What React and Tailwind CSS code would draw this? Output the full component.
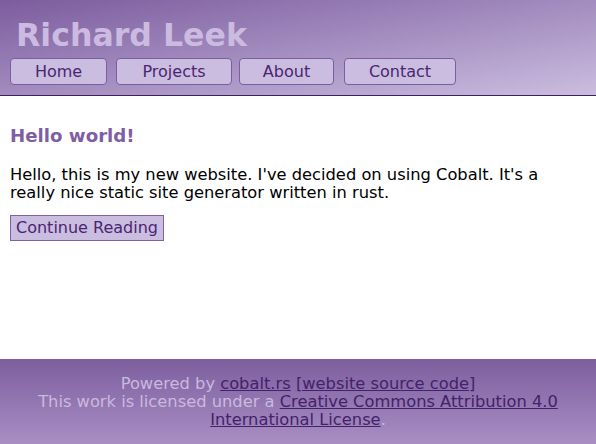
export default function App() {
  const nav = [
    ["Home", "w-[97px]", "ml-[10px]"],
    ["Projects", "w-[116px]", "ml-[9px]"],
    ["About", "w-[95px]", "ml-[7px]"],
    ["Contact", "w-[112px]", "ml-[10px]"],
  ];
  return (
    <div className="min-h-[444px] flex flex-col bg-white" style={{ fontFamily: '"DejaVu Sans", sans-serif' }}>
      <header className="h-[96px] border-b border-[#3d1f5e] bg-gradient-to-br from-[#7c5c9e] to-[#cbbddf]">
        <h1 className="pl-[16px] pt-[14px] text-[31.6px] leading-[42px] font-bold text-[#cbbbe0]">Richard Leek</h1>
        <nav className="flex mt-[2px]">
          {nav.map(([t, w, m]) => (
            <a key={t} className={`${w} ${m} h-[27px] flex items-center justify-center rounded-[4px] border border-[#7c5ca3] bg-[#cbbde0] text-[16px] text-[#4a2570]`}>{t}</a>
          ))}
        </nav>
      </header>
      <main className="flex-1 px-[10px] pt-[28px]">
        <h2 className="text-[18.2px] leading-[24px] font-bold text-[#7f5ea4]">Hello world!</h2>
        <p className="mt-[18px] text-[16.3px] leading-[18px] text-black">Hello, this is my new website. I've decided on using Cobalt. It's a really nice static site generator written in rust.</p>
        <button className="mt-[13px] h-[26px] px-[5px] border border-[#7f5fa5] bg-[#cbbde0] text-[16px] leading-[20px] text-[#4a2570]">Continue Reading</button>
      </main>
      <footer className="h-[85px] bg-gradient-to-b from-[#7d5e9f] to-[#a88fc3] text-center text-[16.3px] leading-[18px] text-[#cab9de] pt-[16px]">
        <div>Powered by <a className="underline text-[#44216a]">cobalt.rs</a> <a className="underline text-[#44216a]">[website source code]</a></div>
        <div className="px-[30px]">This work is licensed under a <a className="underline text-[#44216a]">Creative Commons Attribution 4.0 International License</a>.</div>
      </footer>
    </div>
  );
}
